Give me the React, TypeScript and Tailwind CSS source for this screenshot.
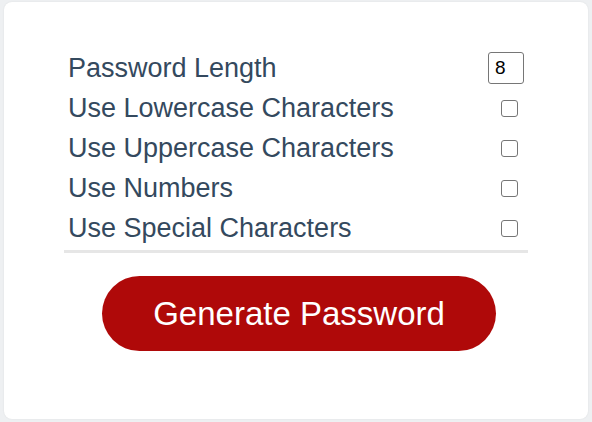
import React, { useState } from "react";

const options = [
    "Use Lowercase Characters",
    "Use Uppercase Characters",
    "Use Numbers",
    "Use Special Characters",
];

export default function App() {
    const [length, setLength] = useState("8");

    return (
        <div className="w-[592px] h-[422px] bg-[#eef0f2] pt-[2px] px-1 font-['Liberation_Sans',Arial,sans-serif]">
            <div className="h-[417px] bg-white rounded-lg shadow-[0_0_2px_rgba(0,0,0,0.08)] flex flex-col items-center pt-[46px]">
                <div className="w-[464px] border-b-[3px] border-b-[#e6e6e6] pb-[2px]">
                    <div className="h-10 flex items-center justify-between pl-1 pr-1 text-[27px] text-[#34495e]">
                        <span>Password Length</span>
                        <input
                            type="number"
                            value={length}
                            onChange={(e) => setLength(e.target.value)}
                            className="w-9 h-8 border border-[#767676] rounded-[3px] pl-[6px] text-[19px] text-black outline-none [appearance:textfield] [&::-webkit-inner-spin-button]:appearance-none"
                        />
                    </div>
                    {options.map((label) => (
                        <div
                            key={label}
                            className="h-10 flex items-center justify-between pl-1 pr-1 text-[27px] text-[#34495e]"
                        >
                            <span>{label}</span>
                            <input
                                type="checkbox"
                                className="appearance-none w-[17px] h-[17px] mr-[6px] border border-[#767676] rounded-[3px] bg-white"
                            />
                        </div>
                    ))}
                </div>
                <button className="mt-[23px] ml-[6px] w-[394px] h-[75px] rounded-full bg-[#af0909] text-white text-[33px]">
                    Generate Password
                </button>
            </div>
        </div>
    );
}
